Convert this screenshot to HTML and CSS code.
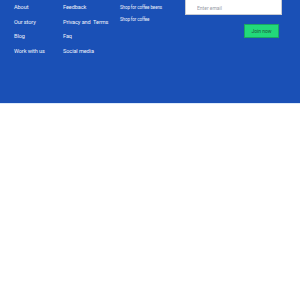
FILE: index.html
```html
<!DOCTYPE html>
<html lang="en">
<head>
    <meta charset="UTF-8">
    <meta name="viewport" content="width=device-width, initial-scale=1.0">
    <title>Footer</title>
    <link rel="stylesheet" href="styles.css">
</head>
<body>
    <footer class="site-footer">
        <div class="footer-inner">
            <ul class="footer-links col-about">
                <li><a href="#">About</a></li>
                <li><a href="#">Our story</a></li>
                <li><a href="#">Blog</a></li>
                <li><a href="#">Work with us</a></li>
            </ul>
            <ul class="footer-links col-help">
                <li><a href="#">Feedback</a></li>
                <li><a href="#">Privacy and&nbsp; Terms</a></li>
                <li><a href="#">Faq</a></li>
                <li><a href="#">Social media</a></li>
            </ul>
            <ul class="footer-links col-shop">
                <li><a href="#">Shop for coffee beens</a></li>
                <li><a href="#">Shop for coffee</a></li>
            </ul>
            <form class="newsletter">
                <input type="email" class="email-input" placeholder="Enter email">
                <button type="button" class="join-btn">Join now</button>
            </form>
        </div>
    </footer>
    <div class="footer-line"></div>
</body>
</html>
```

FILE: styles.css
```css
:root {
    --footer-blue: #1a50b6;
    --join-green: #22d97a;
}

body {
    margin: 0;
    font-family: Roboto, 'Liberation Sans', sans-serif;
    background-color: #fff;
}

.site-footer {
    background-color: var(--footer-blue);
    height: 103px;
    overflow: hidden;
}

.footer-inner {
    display: flex;
    align-items: flex-start;
    padding-left: 14px;
    margin-top: -8px;
}

.footer-links {
    list-style: none;
    margin: 0;
    padding: 0;
    padding-top: 8px;
}

.footer-links li {
    line-height: 14.5px;
    font-size: 5.6px;
    letter-spacing: -0.1px;
}

.footer-links a {
    color: #eef2fb;
    text-decoration: none;
}

.col-about {
    width: 49px;
}

.col-help {
    width: 57px;
}

.col-shop {
    width: 65px;
    padding-top: 10px;
}

.col-shop li {
    font-size: 4.5px;
    line-height: 12px;
}

.newsletter {
    width: 97px;
    display: flex;
    flex-direction: column;
    align-items: flex-end;
}

.email-input {
    box-sizing: border-box;
    width: 97px;
    height: 23px;
    border: 1px solid #c9ccd3;
    background: #fff;
    padding: 8px 0 0 11px;
    font-family: inherit;
    font-size: 5px;
    outline: none;
}

.email-input::placeholder {
    color: #9a9ea8;
}

.join-btn {
    margin-top: 9px;
    margin-right: 3px;
    width: 35px;
    height: 14px;
    padding: 0;
    border: 1px solid #1aa862;
    background-color: var(--join-green);
    color: #1c5a3a;
    font-family: inherit;
    font-size: 5px;
}

.footer-line {
    height: 1px;
    background-color: #dceafb;
}
```
